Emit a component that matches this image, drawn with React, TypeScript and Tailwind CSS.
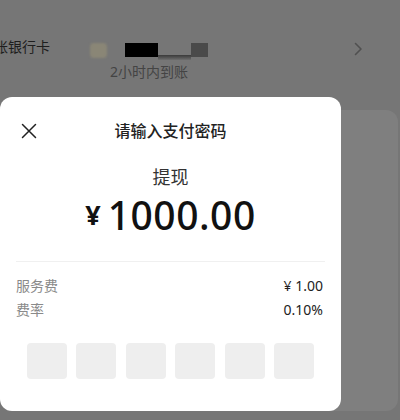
const CJK = "font-['Noto_Sans','Noto_Sans_CJK_SC',sans-serif]";

const FEES = [
  { label: "服务费", value: "¥ 1.00" },
  { label: "费率", value: "0.10%" },
];

function CloseIcon() {
  return (
    <svg width="16" height="16" viewBox="0 0 16 16" fill="none" stroke="#222" strokeWidth="1.5" strokeLinecap="round">
      <path d="M1.5 1.5 L14.5 14.5 M14.5 1.5 L1.5 14.5" />
    </svg>
  );
}

function Chevron() {
  return (
    <svg width="10" height="14" viewBox="0 0 10 14" fill="none" stroke="#505050" strokeWidth="1.6" strokeLinecap="round" strokeLinejoin="round">
      <path d="M2.5 1.5 L8 7 L2.5 12.5" />
    </svg>
  );
}

function BankRow() {
  return (
    <div className="flex h-[110px] items-start pt-[35px]">
      <div className="-ml-[20px] w-[110px] text-[14px] leading-[24px] text-[#1e1e1e]">到账银行卡</div>
      <div className="flex flex-col items-center">
        <div className="mt-[8px] flex h-[15px] items-start">
          <div className="h-[15px] w-[17px] rounded-[4px] bg-[#8a8676] blur-[1px]" />
          <div className="ml-[18px] h-[14px] w-[33px] bg-black" />
          <div className="mt-[12px] h-[5px] w-[33px] bg-gradient-to-b from-[#3a3a3a] to-[#6e6e6e]" />
          <div className="h-[14px] w-[17px] bg-[#4a4a4a]" />
        </div>
        <div className="mt-[4px] text-[14px] leading-[20px] text-[#444]">2小时内到账</div>
      </div>
      <div className="ml-auto mr-[37px] mt-[7px]">
        <Chevron />
      </div>
    </div>
  );
}

function PayModal() {
  return (
    <div className="absolute left-0 top-[97px] flex h-[314px] w-[341px] flex-col rounded-[12px] bg-white">
      <div className="grid h-[68px] grid-cols-[1fr_auto_1fr] items-center">
        <div className="pl-[21px]">
          <CloseIcon />
        </div>
        <div className="text-[16px] font-medium text-[#222]">请输入支付密码</div>
        <div />
      </div>
      <div className="text-center text-[18px] leading-[24px] text-[#333]">提现</div>
      <div className="flex h-[52px] items-center justify-center text-[#111]">
        <span className="mr-[7px] mt-[1px] text-[27px] font-bold font-['Noto_Sans',sans-serif]">¥</span>
        <span className="text-[39px] font-medium tracking-[0.5px] font-['Noto_Sans',sans-serif]">1000.00</span>
      </div>
      <div className="mx-4 mt-[20px] h-px bg-[#f0f0f0]" />
      <div className="mt-[11px] flex flex-col pl-4 pr-[18px]">
        {FEES.map((f) => (
          <div key={f.label} className="flex h-[24px] items-center justify-between text-[14px]">
            <span className="text-[#8a8a8a]">{f.label}</span>
            <span className="text-[#222]">{f.value}</span>
          </div>
        ))}
      </div>
      <div className="mt-[22px] flex justify-between px-[27px]">
        {Array.from({ length: 6 }).map((_, i) => (
          <div key={i} className="h-[36px] w-[40px] rounded-[4px] bg-[#eeeeee]" />
        ))}
      </div>
    </div>
  );
}

export default function App() {
  return (
    <div className={`relative h-[420px] w-[400px] overflow-hidden bg-[#767676] ${CJK}`}>
      <BankRow />
      <div className="ml-[12px] mr-[2px] h-[301px] rounded-[12px] bg-[#7f7f7f]" />
      <PayModal />
    </div>
  );
}
